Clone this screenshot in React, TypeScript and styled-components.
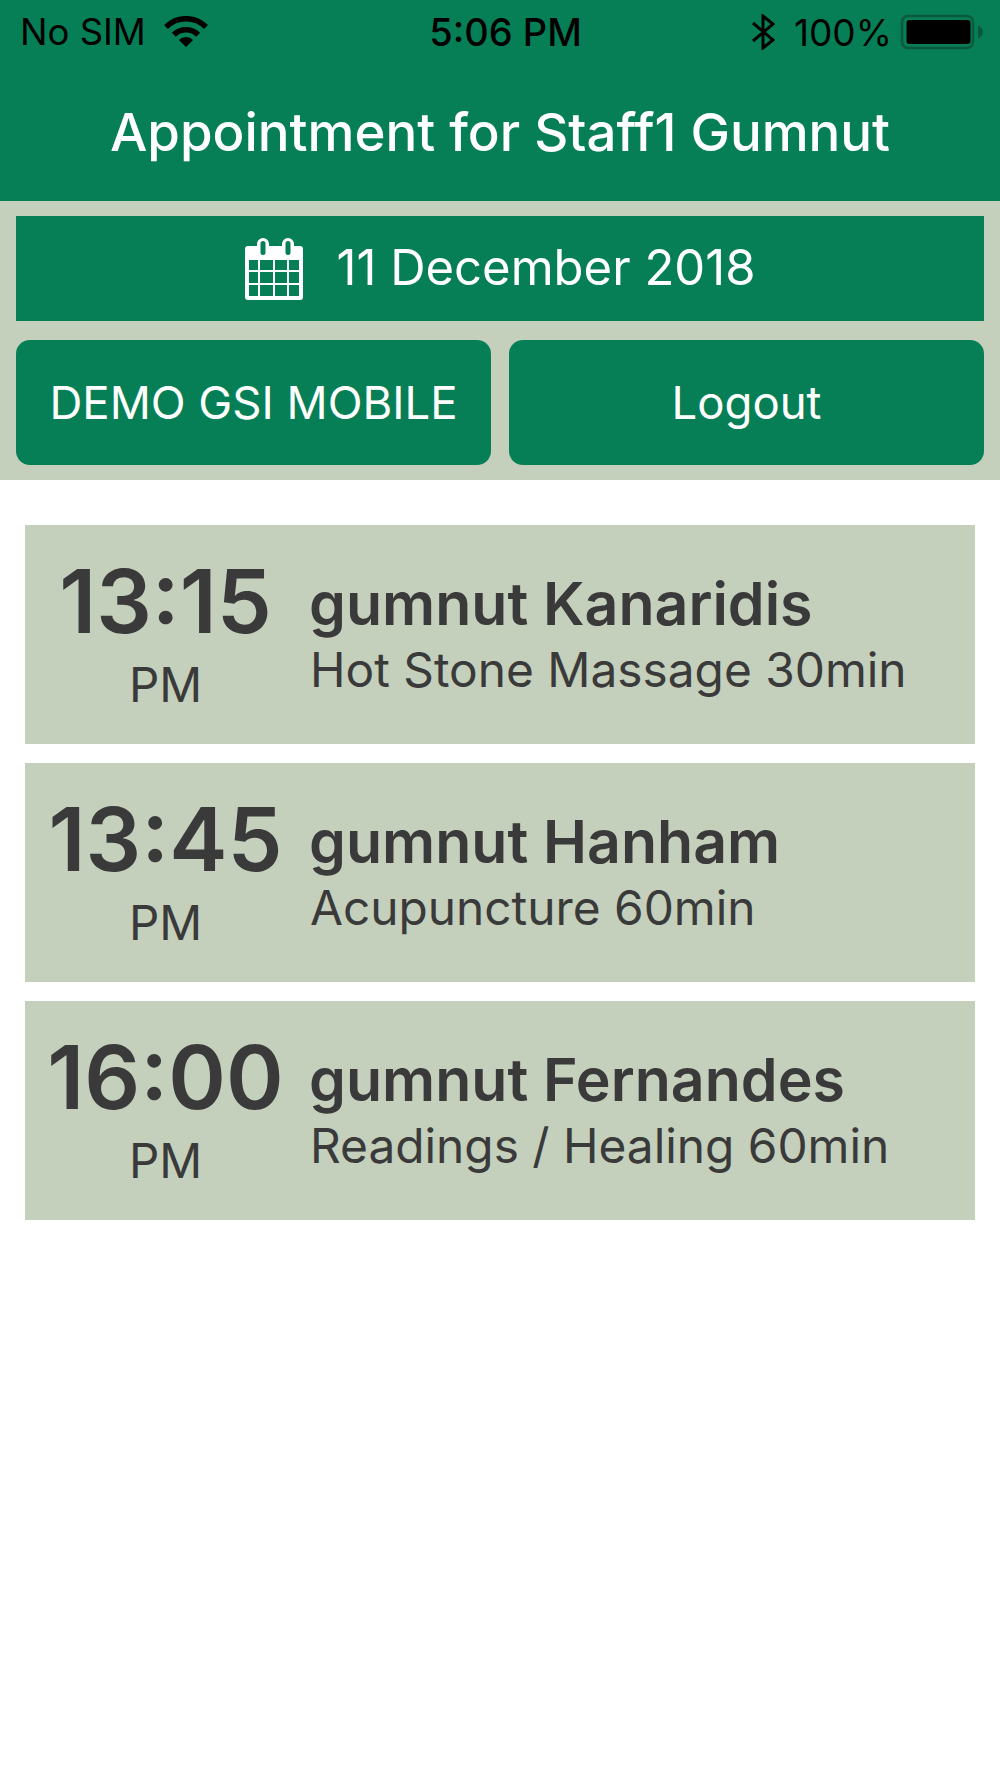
import { createGlobalStyle } from "styled-components"
import styled from "styled-components"

const green = "#067f56"
const sage = "#c4cfbc"
const ink = "#3a3a3a"

const GlobalStyle = createGlobalStyle`
  html, body {
    margin: 0;
    padding: 0;
    background: #fff;
    font-family: Inter, "Liberation Sans", sans-serif;
  }
`

const Page = styled.div`
  width: 1000px;
  height: 1778px;
  overflow: hidden;
  background: #fff;
`

const Header = styled.header`
  height: 201px;
  background: ${green};
  box-sizing: border-box;
`

const StatusBar = styled.div`
  height: 64px;
  padding: 0 16px 0 20px;
  display: grid;
  grid-template-columns: 1fr auto 1fr;
  align-items: center;
  color: #000;
  font-size: 36.5px;
`

const StatusLeft = styled.div`
  display: flex;
  align-items: center;
  gap: 18px;
`

const StatusTime = styled.div`
  padding-left: 7px;
  font-weight: 500;
  font-size: 38px;
`

const StatusRight = styled.div`
  display: flex;
  align-items: center;
  justify-content: flex-end;
  gap: 8px;
  font-size: 37px;
`

const Title = styled.h1`
  margin: 0;
  height: 137px;
  padding-bottom: 2px;
  box-sizing: border-box;
  display: flex;
  align-items: center;
  justify-content: center;
  color: #fff;
  font-size: 52.8px;
  font-weight: 500;
`

const Toolbar = styled.section`
  height: 279px;
  box-sizing: border-box;
  padding: 15px 16px;
  background: ${sage};
  display: grid;
  grid-template-columns: 1fr 1fr;
  grid-template-rows: 105px 125px;
  gap: 19px 18px;
`

const DateBar = styled.div`
  grid-column: 1 / span 2;
  background: ${green};
  color: #fff;
  display: flex;
  align-items: center;
  justify-content: center;
  gap: 34px;
  font-size: 49px;
  font-weight: 400;
`

const DateText = styled.span`
  padding-bottom: 3px;
`

const ActionButton = styled.button`
  border: none;
  border-radius: 14px;
  background: ${green};
  color: #fff;
  font-family: inherit;
  font-size: 45.5px;
  font-weight: 400;
  padding: 0;
`

const List = styled.main`
  padding: 45px 25px 0;
  display: flex;
  flex-direction: column;
  gap: 19px;
`

const Card = styled.article`
  height: 219px;
  background: ${sage};
  color: ${ink};
  display: flex;
  align-items: center;
`

const TimeCol = styled.div`
  width: 281px;
  flex: none;
  text-align: center;
`

const Clock = styled.div`
  font-size: 87.5px;
  font-weight: 600;
  line-height: 100px;
  margin-top: -5px;
  margin-bottom: 5px;
`

const Meridiem = styled.div`
  font-size: 47.5px;
  font-weight: 400;
  line-height: 58px;
`

const Details = styled.div`
  padding-left: 3px;
`

const Client = styled.div`
  font-size: 59px;
  font-weight: 600;
  line-height: 70px;
`

const Service = styled.div`
  font-size: 47.8px;
  font-weight: 400;
  line-height: 62px;
  padding-left: 1px;
`

const BluetoothSvg = styled.svg`
  margin-right: 11px;
`

const WifiIcon = () => (
  <svg width="44" height="32" viewBox="0 0 44 32" fill="none" stroke="#000" strokeWidth="5.5">
    <path d="M2 11 A28.25 28.25 0 0 1 42 11" />
    <path d="M9.8 18.8 A17.25 17.25 0 0 1 34.2 18.8" />
    <path d="M22 31 L14.9 23.9 A10 10 0 0 1 29.1 23.9 Z" fill="#000" stroke="none" />
  </svg>
)

const BluetoothIcon = () => (
  <BluetoothSvg width="23" height="36" viewBox="0 0 23 36" fill="none" stroke="#000" strokeWidth="3">
    <path d="M1 9 L21 26 L11 34 V2 L21 10 L1 27" />
  </BluetoothSvg>
)

const BatteryIcon = () => (
  <svg width="84" height="36" viewBox="0 0 84 36">
    <rect x="2" y="2" width="71" height="32" rx="6" fill="none" stroke="#0b5a3f" strokeWidth="2.5" />
    <rect x="6.5" y="6" width="64" height="24" rx="3" fill="#000" />
    <path d="M78 11 C81 13 83 15 83 18 C83 21 81 23 78 25 Z" fill="#0b5a3f" />
  </svg>
)

const calendarRows = [22, 34, 47]
const calendarRowHeights = [10, 11, 11]
const calendarCols = [4, 15, 30, 44]
const calendarColWidths = [9, 13, 12, 10]

const CalendarIcon = () => (
  <svg width="58" height="62" viewBox="0 0 58 62">
    <path
      fill="#fff"
      d="M3 8 H12 V6 a6 6 0 0 1 12 0 V8 H37 V6 a6 6 0 0 1 12 0 V8 H55 a3 3 0 0 1 3 3 V59 a3 3 0 0 1 -3 3 H3 a3 3 0 0 1 -3 -3 V11 a3 3 0 0 1 3 -3 Z"
    />
    <rect x="15.5" y="3" width="5" height="14" rx="2.5" fill={green} />
    <rect x="40.5" y="3" width="5" height="14" rx="2.5" fill={green} />
    {calendarRows.map((y, r) =>
      calendarCols.map((x, c) => (
        <rect key={`${r}-${c}`} x={x} y={y} width={calendarColWidths[c]} height={calendarRowHeights[r]} fill={green} />
      ))
    )}
  </svg>
)

const appointments = [
  { time: "13:15", client: "gumnut Kanaridis", service: "Hot Stone Massage 30min" },
  { time: "13:45", client: "gumnut Hanham", service: "Acupuncture 60min" },
  { time: "16:00", client: "gumnut Fernandes", service: "Readings / Healing 60min" },
]

export default function App() {
  return (
    <Page>
      <GlobalStyle />
      <Header>
        <StatusBar>
          <StatusLeft>
            <span>No SIM</span>
            <WifiIcon />
          </StatusLeft>
          <StatusTime>5:06 PM</StatusTime>
          <StatusRight>
            <BluetoothIcon />
            <span>100%</span>
            <BatteryIcon />
          </StatusRight>
        </StatusBar>
        <Title>Appointment for Staff1 Gumnut</Title>
      </Header>
      <Toolbar>
        <DateBar>
          <CalendarIcon />
          <DateText>11 December 2018</DateText>
        </DateBar>
        <ActionButton>DEMO GSI MOBILE</ActionButton>
        <ActionButton>Logout</ActionButton>
      </Toolbar>
      <List>
        {appointments.map((a) => (
          <Card key={a.time}>
            <TimeCol>
              <Clock>{a.time}</Clock>
              <Meridiem>PM</Meridiem>
            </TimeCol>
            <Details>
              <Client>{a.client}</Client>
              <Service>{a.service}</Service>
            </Details>
          </Card>
        ))}
      </List>
    </Page>
  )
}
